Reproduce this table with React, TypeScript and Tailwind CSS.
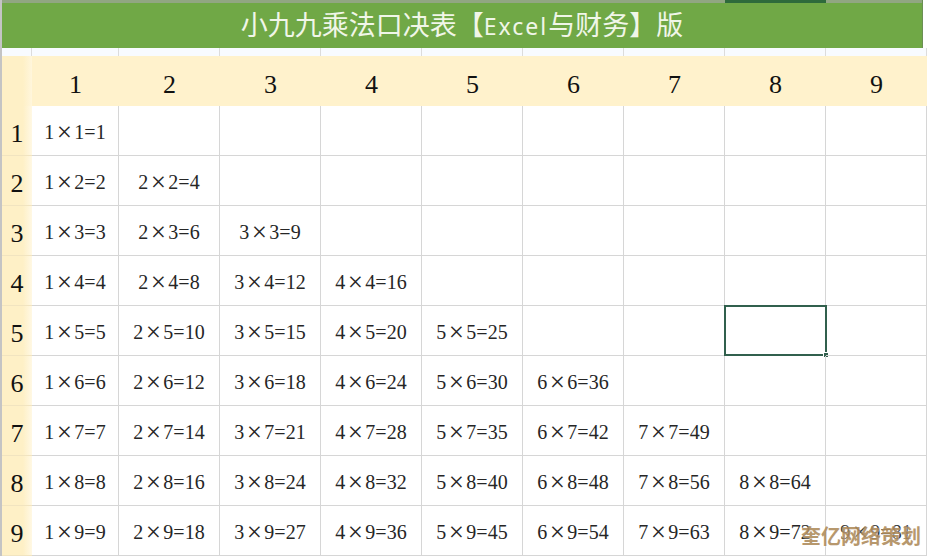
const nums = [1, 2, 3, 4, 5, 6, 7, 8, 9];

const Formula: React.FC<{ a: number; b: number }> = ({ a, b }) => {
    return (
        <span className="whitespace-nowrap">
            {a}
            <span className="inline-block w-[20px] text-center text-[27px] leading-none align-[-2px]">×</span>
            {b}={a * b}
        </span>
    )
}

export default function App() {
    return (
        <div className="w-[929px] h-[557px] overflow-hidden bg-white relative font-['Liberation_Serif',serif] text-[#262626]">
            <div className="border-l-2 border-[#c4c4c4] w-[927px]">
                {/* title bar */}
                <div className="w-[921px] border-r border-[#6b8f55]">
                    <div className="grid grid-cols-[30px_87px_repeat(8,101px)] h-[3px] bg-[#91a682]">
                        <div className="col-start-9 bg-[#2e6a3b]" />
                    </div>
                    <div className="h-[45px] bg-[#70a846] flex items-center justify-center pb-[2px] text-[#f0f6e8] text-[27px] font-['Noto_Sans_CJK_SC',sans-serif]">
                        <span>小九九乘法口决表【<span className="font-['Noto_Sans',sans-serif] text-[23px] tracking-[2px]">Excel</span>与财务】版</span>
                    </div>
                </div>

                {/* strip of the hidden row */}
                <div className="grid grid-cols-[30px_87px_repeat(8,101px)] h-[8px] bg-[#f8fbff]">
                    <div className="border-r border-[#dcdcdc]" />
                    {nums.map((c) => <div key={c} className="border-r border-[#dcdcdc]" />)}
                </div>

                {/* column header */}
                <div className="grid grid-cols-[30px_87px_repeat(8,101px)] h-[50px] bg-[#fff2cc]">
                    <div className="bg-linear-to-r from-[#fef0c6] from-70% to-[#fff6dc]" />
                    {nums.map((c) => (
                        <div key={c} className="flex items-center justify-center pt-[6px] text-[26px] text-[#111]">{c}</div>
                    ))}
                </div>

                {/* rows */}
                {nums.map((r) => (
                    <div key={r} className="grid grid-cols-[30px_87px_repeat(8,101px)] h-[50px]">
                        <div className="flex items-center justify-center pt-[5px] text-[26px] text-[#111] bg-linear-to-r from-[#fef0c6] from-70% to-[#fff8e4] border-b border-[#f1e4c0]">{r}</div>
                        {nums.map((c) => (
                            <div key={c} className="relative flex items-center justify-center pt-[3px] text-[20px] border-r border-b border-[#d6d6d6]">
                                {c <= r ? <Formula a={c} b={r} /> : null}
                                {r === 5 && c === 8 ? (
                                    <div className="absolute -left-px -top-px w-[103px] h-[51px] border-2 border-[#31604d]">
                                        <div className="absolute -right-[4px] -bottom-[4px] w-[6px] h-[6px] bg-[#31604d] border border-white" />
                                    </div>
                                ) : null}
                            </div>
                        ))}
                    </div>
                ))}
            </div>

            {/* watermark */}
            <div className="absolute right-[8px] bottom-[6px] text-[20px] font-bold text-[#b08d5e] opacity-90 font-['Noto_Sans_CJK_SC',sans-serif] [text-shadow:0_0_2px_#fff]">
                奎亿网络策划
            </div>
        </div>
    )
}
